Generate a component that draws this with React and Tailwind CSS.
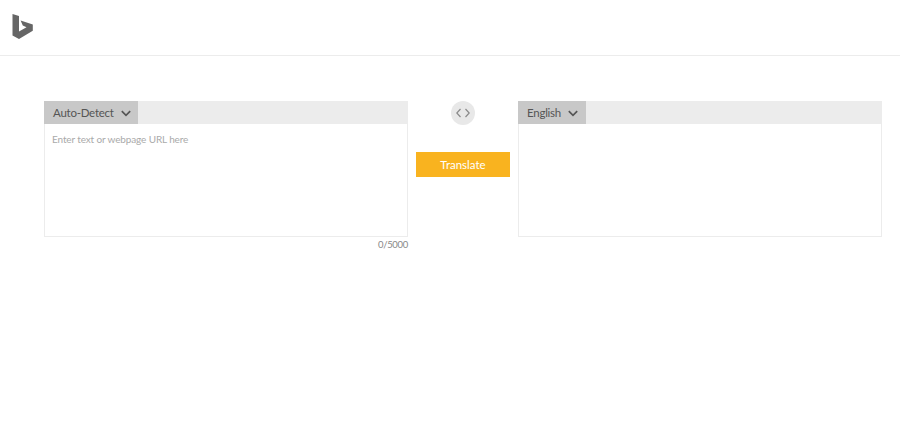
import React from 'react';

const Chevron = () => (
  <svg width="10" height="7" viewBox="0 0 10 7" fill="none" className="ml-[7px] mt-[2px] shrink-0">
    <path d="M0.8 1.2 L5 5.4 L9.2 1.2" stroke="#555" strokeWidth="1.7" />
  </svg>
);

const LangBar = ({ label, width }) => (
  <div className="h-[23px] bg-[#ececec] flex">
    <button className={`h-full bg-[#c8c8c8] flex items-center pl-[9px] text-[11.5px] tracking-[-0.25px] text-[#555] whitespace-nowrap ${width}`}>
      <span>{label}</span>
      <Chevron />
    </button>
  </div>
);

const App = () => {
  return (
    <div className="h-[429px] bg-white overflow-hidden font-['Lato',sans-serif]">
      <header className="h-[56px] border-b border-[#ececec] pl-[12px] pt-[14px]">
        <svg width="21" height="25" viewBox="0 0 21 25">
          <path d="M0.5 0 L7 2 V17.5 L14.5 13.2 L10.8 11.4 L8.6 6.4 L20.8 10.6 V16.8 L7 25 L0.5 21.5 Z" fill="#666" />
        </svg>
      </header>

      <main className="flex pl-[44px] pt-[45px]">
        <div className="w-[364px]">
          <LangBar label="Auto-Detect" width="w-[94px]" />
          <div className="h-[113px] border border-t-0 border-[#ececec] pl-[7px] pt-[8px] text-[10px] tracking-[-0.13px] text-[#aaa]">
            Enter text or webpage URL here
          </div>
          <div className="text-right text-[9.5px] tracking-[-0.3px] text-[#888] leading-[14px] mt-[1px]">0/5000</div>
        </div>

        <div className="w-[110px] flex flex-col items-center">
          <button className="w-[24px] h-[24px] rounded-full bg-[#e8e8e8] flex items-center justify-center">
            <svg width="14" height="10" viewBox="0 0 14 10" fill="none" stroke="#8a8a8a" strokeWidth="1.2">
              <path d="M4.5 1 L0.8 5 L4.5 9" />
              <path d="M9.5 1 L13.2 5 L9.5 9" />
            </svg>
          </button>
          <button className="mt-[27px] w-[94px] h-[25px] bg-[#f9b31f] text-white text-[11.5px]">Translate</button>
        </div>

        <div className="w-[364px]">
          <LangBar label="English" width="w-[68px]" />
          <div className="h-[113px] border border-t-0 border-[#ececec]"></div>
        </div>
      </main>
    </div>
  );
};

export default App;
